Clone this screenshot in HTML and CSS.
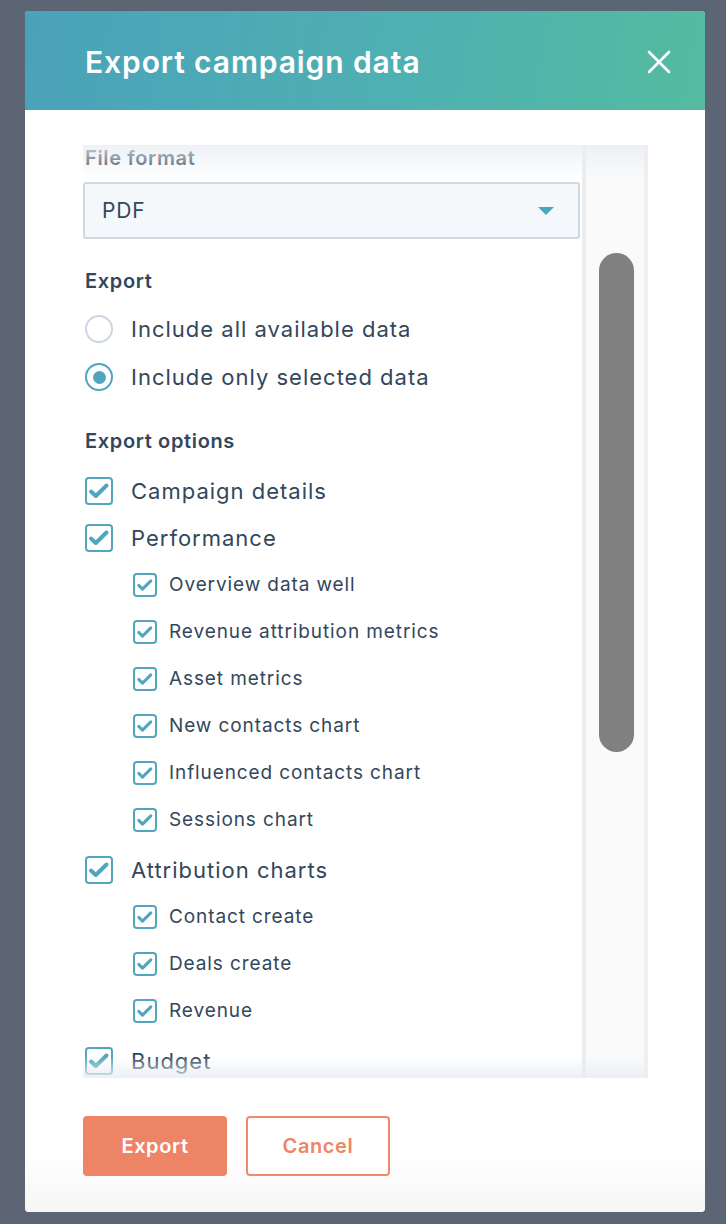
FILE: index.html
```html
<!DOCTYPE html>
<html lang="en">
<head>
<meta charset="utf-8">
<title>Export campaign data</title>
<link rel="stylesheet" href="styles.css">
</head>
<body>
<div class="modal">
  <header class="modal-header">
    <h1 class="modal-title">Export campaign data</h1>
    <button class="close-btn" aria-label="Close">
      <svg viewBox="0 0 24 24" width="24" height="24"><path d="M2 2 L22 22 M22 2 L2 22" fill="none" stroke="#ffffff" stroke-width="2.6" stroke-linecap="round"/></svg>
    </button>
  </header>
  <div class="modal-body">
    <div class="scroll">
      <div class="scroll-content">
        <div class="field-label">File format</div>
        <div class="select"><span>PDF</span><span class="caret"></span></div>
        <div class="field-label section">Export</div>
        <div class="radio-row"><span class="radio"></span><span>Include all available data</span></div>
        <div class="radio-row"><span class="radio checked"></span><span>Include only selected data</span></div>
        <div class="field-label section-options">Export options</div>
        <div class="options">
          <div class="check-row"><span class="checkbox"><svg viewBox="0 0 24 24"><path d="M4 12.5 L8.8 17 L19.5 6.5"/></svg></span><span>Campaign details</span></div>
          <div class="check-row"><span class="checkbox"><svg viewBox="0 0 24 24"><path d="M4 12.5 L8.8 17 L19.5 6.5"/></svg></span><span>Performance</span></div>
          <div class="sub-group">
            <div class="check-row sub"><span class="checkbox"><svg viewBox="0 0 24 24"><path d="M4.5 12.5 L9 17 L19 7"/></svg></span><span>Overview data well</span></div>
            <div class="check-row sub"><span class="checkbox"><svg viewBox="0 0 24 24"><path d="M4.5 12.5 L9 17 L19 7"/></svg></span><span>Revenue attribution metrics</span></div>
            <div class="check-row sub"><span class="checkbox"><svg viewBox="0 0 24 24"><path d="M4.5 12.5 L9 17 L19 7"/></svg></span><span>Asset metrics</span></div>
            <div class="check-row sub"><span class="checkbox"><svg viewBox="0 0 24 24"><path d="M4.5 12.5 L9 17 L19 7"/></svg></span><span>New contacts chart</span></div>
            <div class="check-row sub"><span class="checkbox"><svg viewBox="0 0 24 24"><path d="M4.5 12.5 L9 17 L19 7"/></svg></span><span>Influenced contacts chart</span></div>
            <div class="check-row sub"><span class="checkbox"><svg viewBox="0 0 24 24"><path d="M4.5 12.5 L9 17 L19 7"/></svg></span><span>Sessions chart</span></div>
          </div>
          <div class="check-row"><span class="checkbox"><svg viewBox="0 0 24 24"><path d="M4 12.5 L8.8 17 L19.5 6.5"/></svg></span><span>Attribution charts</span></div>
          <div class="sub-group">
            <div class="check-row sub"><span class="checkbox"><svg viewBox="0 0 24 24"><path d="M4.5 12.5 L9 17 L19 7"/></svg></span><span>Contact create</span></div>
            <div class="check-row sub"><span class="checkbox"><svg viewBox="0 0 24 24"><path d="M4.5 12.5 L9 17 L19 7"/></svg></span><span>Deals create</span></div>
            <div class="check-row sub"><span class="checkbox"><svg viewBox="0 0 24 24"><path d="M4.5 12.5 L9 17 L19 7"/></svg></span><span>Revenue</span></div>
          </div>
          <div class="check-row last"><span class="checkbox"><svg viewBox="0 0 24 24"><path d="M4 12.5 L8.8 17 L19.5 6.5"/></svg></span><span>Budget</span></div>
        </div>
      </div>
      <div class="scroll-track"><div class="scroll-thumb"></div></div>
      <div class="fade fade-top"></div>
      <div class="fade fade-bottom"></div>
    </div>
  </div>
  <footer class="modal-footer">
    <button class="btn btn-primary">Export</button>
    <button class="btn btn-secondary">Cancel</button>
  </footer>
</div>
</body>
</html>
```

FILE: styles.css
```css
* { box-sizing: border-box; }

html, body {
  margin: 0;
  padding: 0;
}

body {
  background: #5b6574;
  width: 726px;
  height: 1224px;
  overflow: hidden;
  font-family: "Inter", "Noto Sans", sans-serif;
  color: #33475b;
}

.modal {
  margin: 11px 0 0 25px;
  width: 680px;
  height: 1201px;
  background: #ffffff;
  border-radius: 4px;
  overflow: hidden;
  display: flex;
  flex-direction: column;
}

.modal-header {
  height: 99px;
  flex: none;
  display: flex;
  align-items: center;
  justify-content: space-between;
  padding: 0 34px 0 60px;
  background: linear-gradient(100deg, #4aa2ba 0%, #4fb0b2 55%, #55bba0 100%);
}

.modal-title {
  margin: 0;
  font-size: 30px;
  font-weight: 600;
  letter-spacing: 0.9px;
  color: #ffffff;
  line-height: 1;
  padding-top: 2px;
}

.close-btn {
  border: 0;
  background: transparent;
  padding: 0;
  width: 24px;
  height: 24px;
  display: block;
  margin-top: 2px;
}

.close-btn svg { display: block; }

.modal-body {
  flex: none;
  padding: 35px 57px 0 58px;
}

.scroll {
  position: relative;
  height: 933px;
  display: flex;
}

.scroll-content {
  flex: 1;
  overflow: hidden;
  padding-left: 2px;
  min-width: 0;
}

.field-label {
  font-size: 20px;
  font-weight: 600;
  line-height: 24px;
  letter-spacing: 0.65px;
  margin-top: 1px;
}

.field-label.section { margin-top: 30px; }
.field-label.section-options { margin-top: 28px; }

.select {
  margin: 12px 0 0 -2px;
  width: 497px;
  height: 57px;
  background: #f5f8fa;
  border: 2px solid #cfd8e2;
  border-radius: 3px;
  display: flex;
  align-items: center;
  justify-content: space-between;
  padding: 0 24px 0 17px;
  font-size: 21px;
  letter-spacing: 0.9px;
}

.caret {
  width: 0;
  height: 0;
  border-left: 8.5px solid transparent;
  border-right: 8.5px solid transparent;
  border-top: 8px solid #4ba5bb;
}

.radio-row {
  height: 48px;
  display: flex;
  align-items: center;
  gap: 18px;
  font-size: 22px;
  letter-spacing: 1px;
}

.field-label.section + .radio-row { margin-top: 12px; }

.radio {
  flex: none;
  width: 28px;
  height: 28px;
  border-radius: 50%;
  border: 2px solid #cbd6e2;
  background: #ffffff;
  display: flex;
  align-items: center;
  justify-content: center;
}

.radio.checked { border-color: #4fa6bd; }
.radio.checked::after {
  content: "";
  width: 13px;
  height: 13px;
  border-radius: 50%;
  background: #4fa6bd;
}

.options { margin-top: 14px; }

.check-row {
  height: 47px;
  display: flex;
  align-items: center;
  gap: 18px;
  font-size: 22px;
  letter-spacing: 1px;
}

.checkbox {
  flex: none;
  width: 28px;
  height: 28px;
  border: 2px solid #4fa6bd;
  border-radius: 4px;
  background: #ffffff;
}

.checkbox svg {
  display: block;
  width: 100%;
  height: 100%;
  fill: none;
  stroke: #4fa6bd;
  stroke-width: 4;
  stroke-linecap: round;
  stroke-linejoin: round;
}

.sub-group { margin-bottom: 3px; }

.check-row.sub {
  padding-left: 48px;
  gap: 12px;
  font-size: 19px;
  letter-spacing: 0.9px;
}

.check-row.sub .checkbox {
  width: 24px;
  height: 24px;
  border-radius: 4px;
}

.check-row.sub .checkbox svg { stroke-width: 3.6; }

.scroll-track {
  flex: none;
  width: 66px;
  background: #fafafa;
  border-left: 4px solid #ececec;
  border-right: 4px solid #efefef;
  padding: 108px 0 0 13px;
}

.scroll-thumb {
  width: 35px;
  height: 499px;
  border-radius: 18px;
  background: #808080;
}

.fade {
  position: absolute;
  left: 0;
  right: 0;
  pointer-events: none;
}

.fade-top {
  top: 0;
  height: 34px;
  background: linear-gradient(to bottom, rgba(233, 238, 243, 0.8), rgba(255, 255, 255, 0));
}

.fade-bottom {
  bottom: 0;
  height: 22px;
  background: linear-gradient(to top, rgba(233, 238, 243, 0.85), rgba(255, 255, 255, 0));
}

.modal-footer {
  flex: 1;
  display: flex;
  align-items: flex-start;
  gap: 19px;
  padding: 38px 0 0 58px;
  background: linear-gradient(to bottom, #ffffff 55%, #f6f6f6 100%);
}

.btn {
  height: 60px;
  width: 144px;
  border-radius: 4px;
  font-family: "Inter", "Noto Sans", sans-serif;
  font-size: 20px;
  font-weight: 600;
  letter-spacing: 0.6px;
  cursor: pointer;
}

.btn-primary {
  background: #ee8466;
  border: 2px solid #ee8466;
  color: #ffffff;
}

.btn-secondary {
  background: #ffffff;
  border: 2px solid #ef8a6c;
  color: #ef8466;
}
```
